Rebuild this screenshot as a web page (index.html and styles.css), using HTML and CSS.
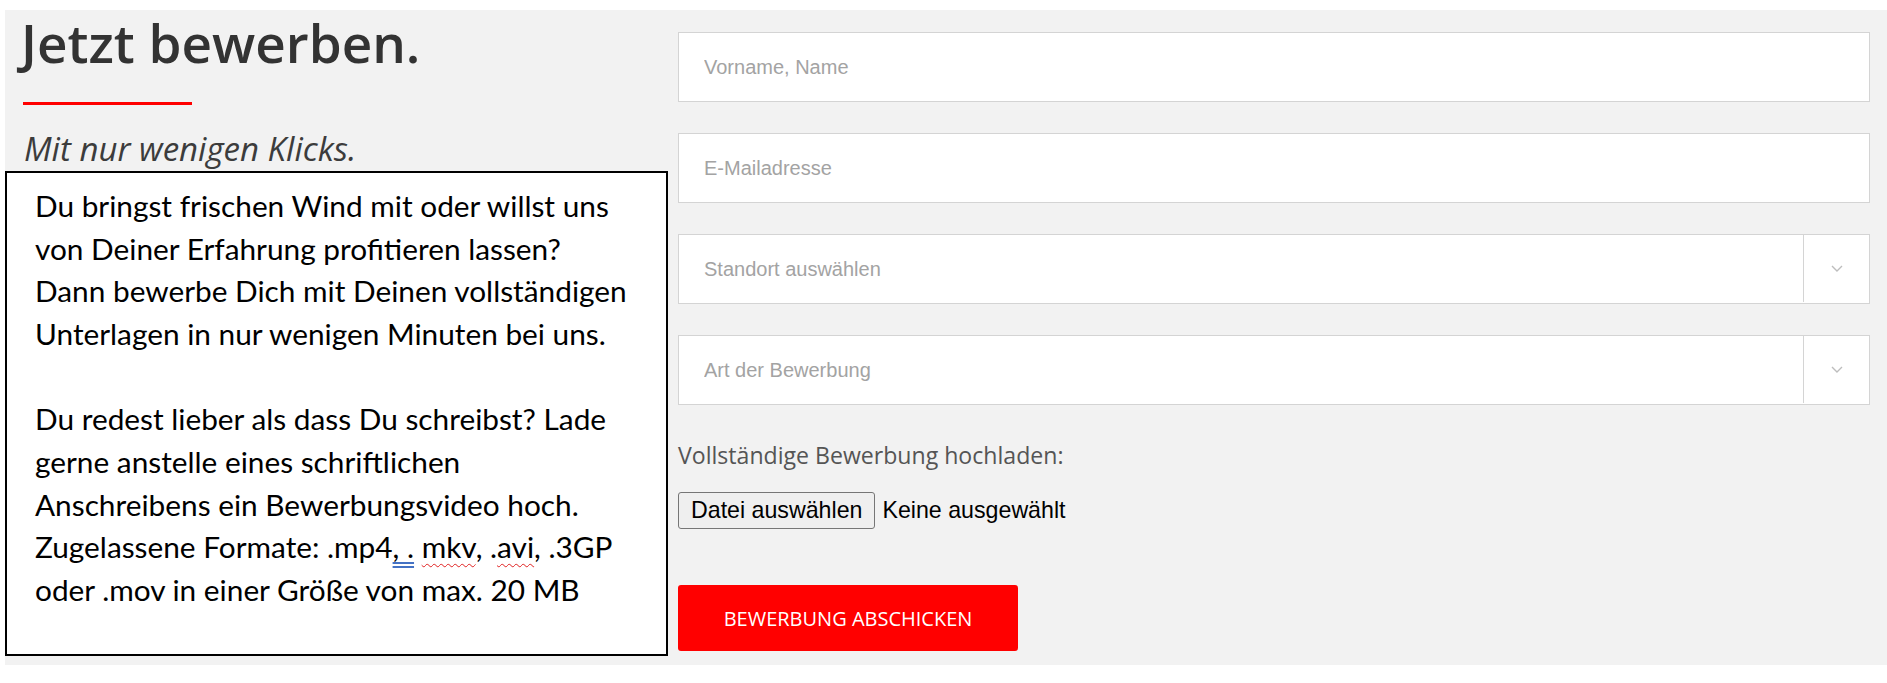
FILE: index.html
```html
<!DOCTYPE html>
<html lang="de">
<head>
    <meta charset="UTF-8">
    <meta name="viewport" content="width=device-width, initial-scale=1.0">
    <title>Jetzt bewerben</title>
    <link rel="stylesheet" href="styles.css">
</head>
<body>

    <div class="page">
        <div class="intro">
            <h1 class="title">Jetzt bewerben.</h1>
            <div class="title-line"></div>
            <p class="subtitle">Mit nur wenigen Klicks.</p>

            <div class="note">
                <p>Du bringst frischen Wind mit oder willst uns<br>
                von Deiner Erfahrung profitieren lassen?<br>
                Dann bewerbe Dich mit Deinen vollständigen<br>
                Unterlagen in nur wenigen Minuten bei uns.</p>
                <p>Du redest lieber als dass Du schreibst? Lade<br>
                gerne anstelle eines schriftlichen<br>
                Anschreibens ein Bewerbungsvideo hoch.<br>
                Zugelassene Formate: .mp4<span class="grammar">, .</span> <span class="spell">mkv</span>, .<span class="spell">avi</span>, .3GP<br>
                oder .mov in einer Größe von max. 20 MB</p>
            </div>
        </div>

        <form class="apply-form" id="applyForm">
            <input type="text" class="field" name="name" placeholder="Vorname, Name">
            <input type="email" class="field" name="email" placeholder="E-Mailadresse">

            <div class="select-wrap">
                <select class="field" name="standort">
                    <option value="">Standort auswählen</option>
                </select>
                <span class="select-arrow">
                    <svg width="12" height="7" viewBox="0 0 12 7"><polyline points="1,1 6,6 11,1" fill="none" stroke="#bdbdbd" stroke-width="1.4"/></svg>
                </span>
            </div>

            <div class="select-wrap">
                <select class="field" name="art">
                    <option value="">Art der Bewerbung</option>
                </select>
                <span class="select-arrow">
                    <svg width="12" height="7" viewBox="0 0 12 7"><polyline points="1,1 6,6 11,1" fill="none" stroke="#bdbdbd" stroke-width="1.4"/></svg>
                </span>
            </div>

            <label class="upload-label" for="cv">Vollständige Bewerbung hochladen:</label>
            <div class="upload">
                <label class="file-btn" for="cv">Datei auswählen</label>
                <span class="file-name">Keine ausgewählt</span>
                <input type="file" id="cv" name="cv" class="file-input">
            </div>

            <button type="button" class="submit">BEWERBUNG ABSCHICKEN</button>
        </form>
    </div>

</body>
</html>
```

FILE: styles.css
```css
body {
    margin: 0;
    background-color: #fff;
}

.page {
    display: flex;
    margin: 10px 0 0 5px;
    height: 655px;
    background-color: #f2f2f2;
}

/* left column */
.intro {
    width: 663px;
    flex-shrink: 0;
}

.title {
    margin: 0;
    padding-left: 16px;
    font-family: "Open Sans", sans-serif;
    font-size: 53px;
    font-weight: 600;
    line-height: 65px;
    color: #333;
}

.title-line {
    width: 169px;
    height: 3px;
    margin: 27px 0 0 18px;
    background-color: #f00;
}

.subtitle {
    margin: 24px 0 0 19px;
    font-family: "Open Sans", sans-serif;
    font-size: 33px;
    font-style: italic;
    font-weight: 400;
    line-height: 40px;
    color: #3c3c3c;
}

.note {
    height: 485px;
    margin-top: 2px;
    padding: 12px 0 0 28px;
    box-sizing: border-box;
    border: 2px solid #000;
    background-color: #fff;
    font-family: Lato, "Open Sans", sans-serif;
    font-size: 29.8px;
    line-height: 42.67px;
    color: #000;
    white-space: nowrap;
}

.note p {
    margin: 0 0 42.67px;
}

.grammar {
    text-decoration: underline double #4472c4;
    text-underline-offset: 4px;
}

.spell {
    text-decoration: underline wavy #e02020;
    text-decoration-thickness: 1px;
    text-underline-offset: 5px;
}

/* right column */
.apply-form {
    flex: 1;
    padding: 22px 17px 0 10px;
}

.field {
    display: block;
    width: 100%;
    height: 70px;
    margin: 0 0 31px;
    padding: 0 25px;
    box-sizing: border-box;
    border: 1px solid #d4d4d4;
    border-radius: 0;
    background-color: #fff;
    font-family: "Liberation Sans", Arial, sans-serif;
    font-size: 20px;
    color: #333;
    outline: none;
}

.field::placeholder {
    color: #a3a3a3;
}

select.field {
    appearance: none;
    color: #a3a3a3;
}

.select-wrap {
    position: relative;
}

.select-arrow {
    position: absolute;
    top: 1px;
    right: 1px;
    bottom: 2px;
    width: 65px;
    border-left: 1px solid #d4d4d4;
    display: flex;
    justify-content: center;
    align-items: center;
    pointer-events: none;
}

.upload-label {
    display: block;
    margin-top: 35px;
    font-family: "Open Sans", sans-serif;
    font-size: 23.1px;
    line-height: 30px;
    color: #555;
}

.upload {
    display: flex;
    align-items: center;
    margin-top: 22px;
    font-family: "Liberation Sans", Arial, sans-serif;
    font-size: 23.2px;
    color: #000;
}

.file-btn {
    display: flex;
    align-items: center;
    height: 37px;
    padding: 0 12px;
    box-sizing: border-box;
    border: 1px solid #767676;
    border-radius: 3px;
    background-color: #efefef;
    cursor: pointer;
}

.file-name {
    margin-left: 7px;
}

.file-input {
    display: none;
}

.submit {
    display: block;
    width: 340px;
    height: 66px;
    margin-top: 56px;
    border: none;
    border-radius: 3px;
    background-color: #f00;
    font-family: "Open Sans", sans-serif;
    font-size: 20px;
    color: #fff;
    cursor: pointer;
}

.submit:hover {
    background-color: #e00000;
}
```
